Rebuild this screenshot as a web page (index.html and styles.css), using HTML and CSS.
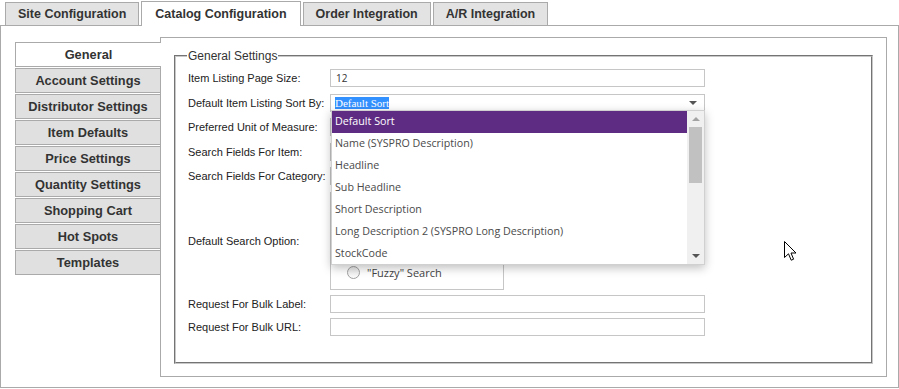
FILE: index.html
```html
<!DOCTYPE html>
<html lang="en">
<head>
    <meta charset="UTF-8">
    <title>Catalog Configuration</title>
    <link rel="stylesheet" href="styles.css">
</head>
<body>

    <div class="tabs">
        <div class="tab">Site Configuration</div>
        <div class="tab active">Catalog Configuration</div>
        <div class="tab">Order Integration</div>
        <div class="tab">A/R Integration</div>
    </div>

    <div class="page">
        <ul class="side-tabs">
            <li class="active">General</li>
            <li>Account Settings</li>
            <li>Distributor Settings</li>
            <li>Item Defaults</li>
            <li>Price Settings</li>
            <li>Quantity Settings</li>
            <li>Shopping Cart</li>
            <li>Hot Spots</li>
            <li>Templates</li>
        </ul>

        <div class="panel">
            <fieldset class="settings">
                <legend>General Settings</legend>

                <div class="row">
                    <label>Item Listing Page Size:</label>
                    <input type="text" value="12">
                </div>

                <div class="row">
                    <label>Default Item Listing Sort By:</label>
                    <div class="select-wrap">
                        <div class="select"><span class="picked">Default Sort</span><span class="arrow"></span></div>
                        <div class="dropdown">
                            <ul class="options">
                                <li class="selected">Default Sort</li>
                                <li>Name (SYSPRO Description)</li>
                                <li>Headline</li>
                                <li>Sub Headline</li>
                                <li>Short Description</li>
                                <li>Long Description 2 (SYSPRO Long Description)</li>
                                <li>StockCode</li>
                            </ul>
                            <div class="scrollbar">
                                <span class="up"></span>
                                <span class="thumb"></span>
                                <span class="down"></span>
                            </div>
                        </div>
                    </div>
                </div>

                <div class="row">
                    <label>Preferred Unit of Measure:</label>
                    <div class="select"><span class="arrow"></span></div>
                </div>

                <div class="row">
                    <label>Search Fields For Item:</label>
                    <input type="text">
                </div>

                <div class="row">
                    <label>Search Fields For Category:</label>
                    <input type="text">
                </div>

                <div class="row tall">
                    <label>Default Search Option:</label>
                    <div class="radio-box">
                        <div class="radio"><span class="dot"></span>"Fuzzy" Search</div>
                    </div>
                </div>

                <div class="row short">
                    <label>Request For Bulk Label:</label>
                    <input type="text">
                </div>

                <div class="row short">
                    <label>Request For Bulk URL:</label>
                    <input type="text">
                </div>
            </fieldset>
        </div>
    </div>

    <svg class="cursor" width="13" height="21" viewBox="0 0 13 21">
        <path d="M0.5 0.5 L0.5 16.5 L4.5 12.8 L7.2 19.2 L9.6 18.2 L7 12 L12 12 Z" fill="#fff" stroke="#000" stroke-width="1" stroke-linejoin="miter"/>
    </svg>

</body>
</html>
```

FILE: styles.css
```css
body {
    margin: 0;
    font-family: "Liberation Sans", Arial, sans-serif;
    background: #fff;
    color: #333;
    position: relative;
}

/* top tabs */
.tabs {
    display: flex;
    align-items: flex-end;
    gap: 2px;
    height: 26px;
    padding-left: 5px;
    margin-bottom: -1px;
    position: relative;
    z-index: 1;
}

.tab {
    height: 23px;
    margin-bottom: 1px;
    box-sizing: border-box;
    padding: 0 12px;
    border: 1px solid #aaa;
    border-bottom: none;
    background: #e3e3e3;
    font-size: 12.5px;
    font-weight: bold;
    line-height: 22px;
    color: #333;
}

.tab.active {
    height: 25px;
    margin-bottom: 0;
    padding: 0 13px;
    background: #fff;
    line-height: 24px;
}

/* outer frame */
.page {
    display: flex;
    box-sizing: border-box;
    height: 363px;
    border: 1px solid #aaa;
    padding: 11px 11px 10px 14px;
}

.side-tabs {
    list-style: none;
    margin: 5px -1px 0 0;
    padding: 0;
    width: 146px;
    position: relative;
    z-index: 1;
}

.side-tabs li {
    box-sizing: border-box;
    height: 25px;
    margin-bottom: 1px;
    border: 1px solid #aaa;
    background: #e0e0e0;
    text-align: center;
    font-size: 12.8px;
    font-weight: bold;
    line-height: 23px;
}

.side-tabs li.active {
    background: #fff;
    border-right: none;
}

.panel {
    flex: 1;
    display: flex;
    flex-direction: column;
    border: 1px solid #aaa;
    padding: 11px 13px 12px 13px;
}

.settings {
    flex: 1;
    margin: 0;
    min-width: 0;
    border: 2px groove #c8c8c8;
    padding: 3px 12px 0 12px;
}

.settings legend {
    font-size: 12px;
    padding: 0 1px;
    margin-left: -1px;
    color: #333;
}

.row {
    display: flex;
    align-items: center;
    height: 24.5px;
}

.row.tall {
    height: 104px;
}

.row.short {
    height: 23px;
}

.row label {
    width: 142px;
    flex: none;
    font-size: 11px;
    color: #222;
}

input[type="text"] {
    width: 375px;
    height: 18px;
    box-sizing: border-box;
    border: 1px solid #c6c6c6;
    padding: 0 5px;
    font-family: "Open Sans", sans-serif;
    font-size: 10px;
    color: #333;
}

.select-wrap {
    position: relative;
}

.select {
    width: 375px;
    height: 18px;
    box-sizing: border-box;
    border: 1px solid #c6c6c6;
    padding: 0 4px;
    display: flex;
    align-items: center;
    justify-content: space-between;
}

.picked {
    background: #3390ff;
    color: #fff;
    font-family: "Liberation Serif", serif;
    font-size: 11px;
    line-height: 12px;
}

.arrow {
    margin-left: auto;
    margin-right: 3px;
    border-left: 4px solid transparent;
    border-right: 4px solid transparent;
    border-top: 4px solid #555;
}

/* open dropdown list */
.dropdown {
    position: absolute;
    top: 16px;
    left: 1px;
    width: 374px;
    height: 155px;
    box-sizing: border-box;
    display: flex;
    background: #fff;
    border: 1px solid #d0d0d0;
    box-shadow: 0 3px 9px rgba(0, 0, 0, 0.25);
    z-index: 5;
}

.options {
    list-style: none;
    margin: 0;
    padding: 0;
    flex: 1;
}

.options li {
    height: 22px;
    line-height: 21px;
    padding-left: 3px;
    font-family: "Open Sans", sans-serif;
    font-size: 10.7px;
    color: #4a4a4a;
    white-space: nowrap;
}

.options li.selected {
    background: #5e2d83;
    color: #fff;
}

.scrollbar {
    width: 17px;
    background: #f0f0f0;
    display: flex;
    flex-direction: column;
    align-items: center;
}

.scrollbar .up,
.scrollbar .down {
    width: 0;
    height: 0;
    border-left: 4px solid transparent;
    border-right: 4px solid transparent;
}

.scrollbar .up {
    margin-top: 6px;
    border-bottom: 4px solid #a3a3a3;
}

.scrollbar .thumb {
    width: 13px;
    height: 56px;
    margin-top: 6px;
    background: #c1c1c1;
}

.scrollbar .down {
    margin-top: auto;
    margin-bottom: 6px;
    border-top: 4px solid #555;
}

/* radio group */
.radio-box {
    width: 174px;
    height: 98px;
    box-sizing: border-box;
    border: 1px solid #c6c6c6;
    padding: 0 0 5px 16px;
    display: flex;
    flex-direction: column;
    justify-content: flex-end;
}

.radio {
    height: 22px;
    display: flex;
    align-items: center;
    font-family: "Open Sans", sans-serif;
    font-size: 11px;
    color: #444;
}

.radio .dot {
    width: 13px;
    height: 13px;
    box-sizing: border-box;
    border: 1px solid #a0a0a0;
    border-radius: 50%;
    background: linear-gradient(#e6e6e6, #fdfdfd);
    margin-right: 7px;
}

.cursor {
    position: absolute;
    left: 784px;
    top: 241px;
    z-index: 10;
}
```
